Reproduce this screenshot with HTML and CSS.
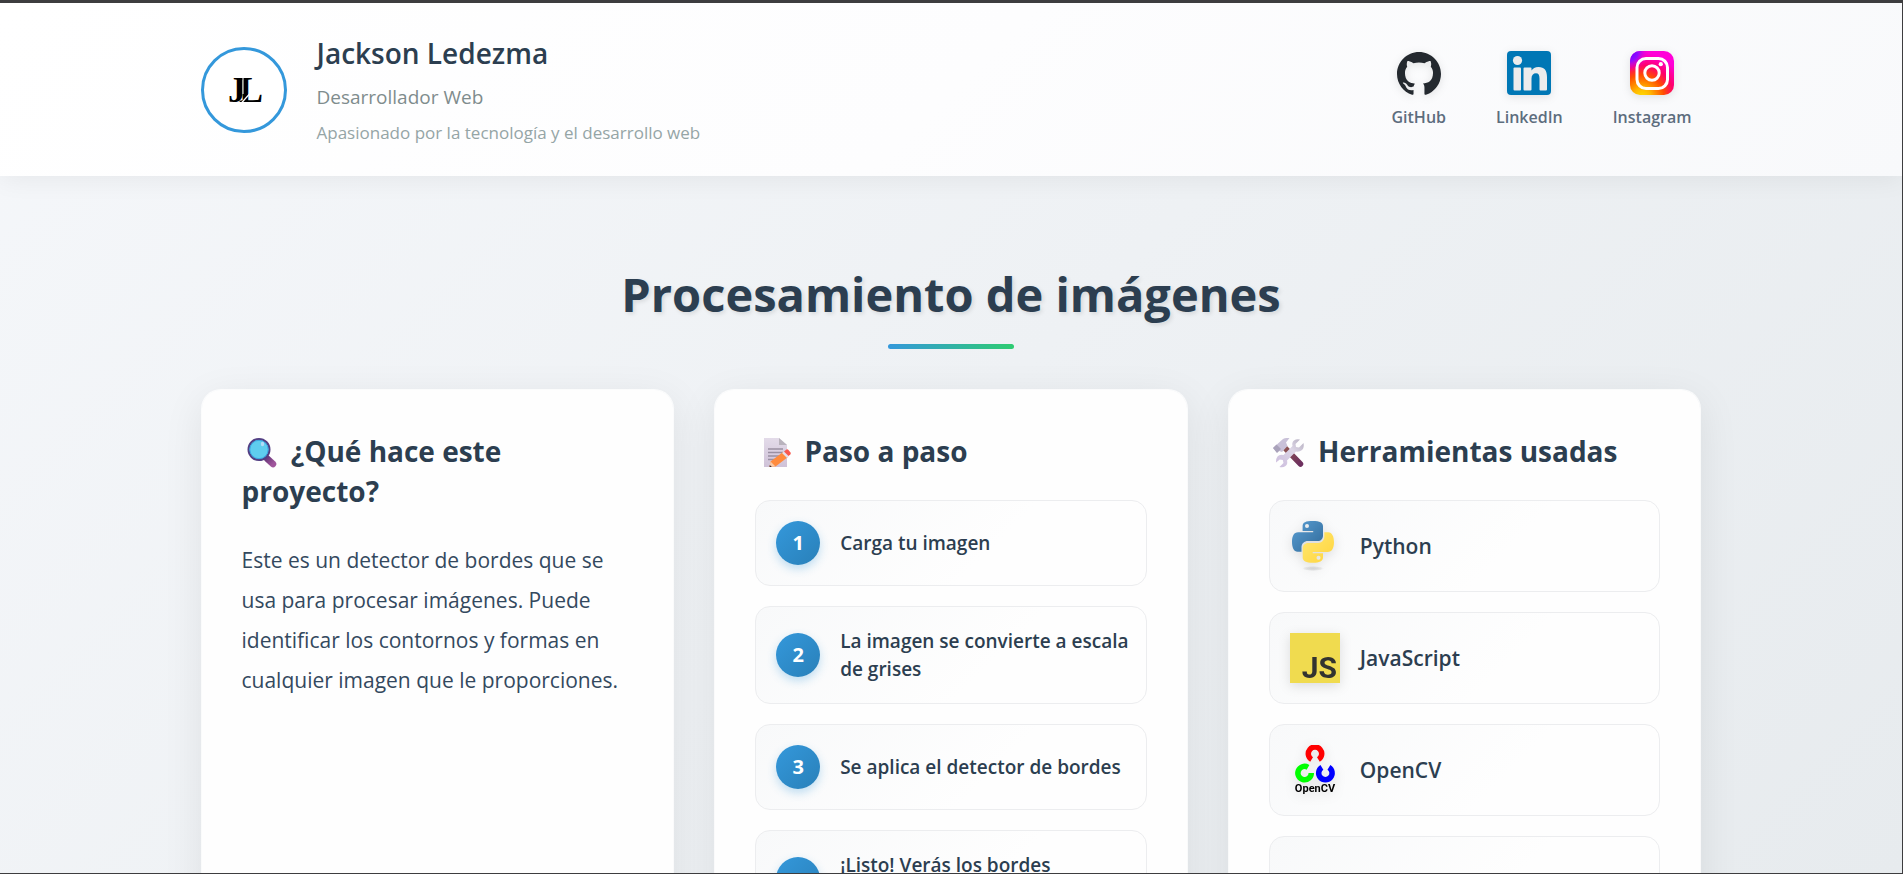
FILE: index.html
```html
<!DOCTYPE html>
<html lang="es">
<head>
<meta charset="utf-8">
<title>Procesamiento de imágenes</title>
<link rel="stylesheet" href="styles.css">
</head>
<body>
<div class="page">
  <header class="site-header">
    <div class="container header-inner">
      <div class="profile">
        <div class="avatar">
          <svg class="logo" width="30" height="28" viewBox="0 0 30 28" role="img" aria-label="Logo JL">
            <text class="logo-letter" x="-1" y="26">J</text>
            <text class="logo-letter" x="10" y="26">L</text>
            <path d="M14 0V18" stroke="#fff" stroke-width="1"/>
            <path d="M12 27.500L24 14" stroke="#fff" stroke-width="1.200"/>
          </svg>
        </div>
        <div class="profile-text">
          <p class="name">Jackson Ledezma</p>
          <p class="role">Desarrollador Web</p>
          <p class="tagline">Apasionado por la tecnología y el desarrollo web</p>
        </div>
      </div>
      <nav class="social">
        <a class="social-link" href="#github">
          <svg class="social-icon" viewBox="0 0 24 24"><path fill="#24292f" d="M12 .5C5.370.5 0 5.870 0 12.500c0 5.300 3.440 9.800 8.200 11.390.6.110.820-.260.820-.580l-.010-2.040c-3.340.730-4.040-1.610-4.040-1.610-.550-1.390-1.330-1.760-1.330-1.760-1.090-.740.080-.730.080-.730 1.200.090 1.840 1.240 1.840 1.240 1.070 1.830 2.810 1.300 3.490 1 .110-.780.420-1.310.760-1.610-2.660-.3-5.470-1.330-5.470-5.930 0-1.310.470-2.380 1.240-3.220-.130-.300-.540-1.520.110-3.180 0 0 1.010-.320 3.300 1.230a11.500 11.500 0 0 1 6.010 0c2.290-1.550 3.300-1.230 3.300-1.230.650 1.660.240 2.880.120 3.180.770.840 1.230 1.910 1.230 3.220 0 4.610-2.810 5.620-5.480 5.920.430.370.810 1.100.810 2.220l-.010 3.290c0 .320.220.700.830.580A12.010 12.010 0 0 0 24 12.500C24 5.870 18.630.5 12 .5z"/></svg>
          <span>GitHub</span>
        </a>
        <a class="social-link" href="#linkedin">
          <svg class="social-icon" viewBox="0 0 44 44"><rect width="44" height="44" rx="4" fill="#0077b5"/><g fill="#ececec"><circle cx="10.500" cy="9.500" r="4.600"/><rect x="6.500" y="16.500" width="7.500" height="23" rx="1"/><path d="M17.500 16.500h6a1 1 0 0 1 1 1v2c1.200-2 3.600-3.600 7-3.600 6 0 8.500 3.600 8.500 10v12.600a1 1 0 0 1-1 1h-5.500a1 1 0 0 1-1-1V27.500c0-3.300-1-5.200-3.500-5.200-2.800 0-4.500 2-4.500 5.200v11a1 1 0 0 1-1 1h-6a1 1 0 0 1-1-1v-21a1 1 0 0 1 1-1z"/></g></svg>
          <span>LinkedIn</span>
        </a>
        <a class="social-link" href="#instagram">
          <svg class="social-icon" viewBox="0 0 44 44">
            <defs>
              <radialGradient id="ig-warm" gradientUnits="userSpaceOnUse" cx="12" cy="46" r="44"><stop offset="0" stop-color="#fd0"/><stop offset=".2" stop-color="#ffb800"/><stop offset=".5" stop-color="#ff4d00"/><stop offset=".72" stop-color="#ff0069"/><stop offset="1" stop-color="#ff00d8"/></radialGradient>
              <radialGradient id="ig-cool" gradientUnits="userSpaceOnUse" cx="-1" cy="1" r="20"><stop offset="0" stop-color="#60f"/><stop offset=".45" stop-color="#8f0cff"/><stop offset="1" stop-color="#ff00c8" stop-opacity="0"/></radialGradient>
            </defs>
            <rect width="44" height="44" rx="10" fill="url(#ig-warm)"/><rect width="44" height="44" rx="10" fill="url(#ig-cool)"/>
            <g fill="none" stroke="#fff" stroke-width="3"><rect x="7" y="7.500" width="30.500" height="30" rx="9"/><circle cx="22" cy="22" r="7.200"/></g><circle cx="30.800" cy="13.200" r="2.100" fill="#fff"/>
          </svg>
          <span>Instagram</span>
        </a>
      </nav>
    </div>
  </header>

  <main class="container main">
    <h1 class="title">Procesamiento de imágenes</h1>
    <div class="cards">
      <section class="card">
        <h2 class="card-title"><svg class="emoji" viewBox="0 0 40 32" aria-hidden="true">
          <defs><linearGradient id="mg-handle" x1="0" y1="0" x2="1" y2="1"><stop offset="0" stop-color="#6d3a7c"/><stop offset="1" stop-color="#a0559c"/></linearGradient></defs>
          <path d="M25 22.500L31 28" stroke="url(#mg-handle)" stroke-width="6.500" stroke-linecap="round"/>
          <circle cx="17" cy="13.500" r="10.500" fill="#5fcdee" stroke="#533f83" stroke-width="2"/><circle cx="17" cy="13.500" r="9.200" fill="none" stroke="#3ba4e0" stroke-width="1"/>
          <ellipse cx="20.500" cy="8" rx="1.700" ry="2.200" fill="#b3dcf7"/>
        </svg> ¿Qué hace este proyecto?</h2>
        <p class="card-text">Este es un detector de bordes que se usa para procesar imágenes. Puede identificar los contornos y formas en cualquier imagen que le proporciones.</p>
      </section>

      <section class="card">
        <h2 class="card-title"><svg class="emoji" viewBox="0 0 40 32" aria-hidden="true">
          <defs><linearGradient id="memo-paper" x1="0" y1="0" x2="0" y2="1"><stop offset="0" stop-color="#e3dbe9"/><stop offset="1" stop-color="#cfc2d8"/></linearGradient></defs>
          <path d="M9 2h15l8 7v22H9z" fill="url(#memo-paper)"/><path d="M24 2l8 7h-8z" fill="#b9b3bd"/>
          <path d="M13 13h15M13 16.500h15M13 20h12M13 23.500h8" stroke="#9a90a3" stroke-width="1.300"/>
          <path d="M15.500 25.500L28 16l5 5-12.500 9.500-6 .5z" fill="#ff8b3d"/><path d="M15.500 25.500l5 5-6 .5z" fill="#f8c9a8"/><path d="M14.800 29l2 2h-2.300z" fill="#3c2b35"/>
          <path d="M27 17l2-1.500 5 4.500-2 2z" fill="#e6e0ea"/><path d="M29 15.500l2.500-2q1-.5 2 .5l2 2.500q.7 1-.2 2l-1.800 1.500z" fill="#f9594f"/>
        </svg> Paso a paso</h2>
        <ol class="list">
          <li class="item"><span class="badge">1</span><span class="step-text">Carga tu imagen</span></li>
          <li class="item"><span class="badge">2</span><span class="step-text">La imagen se convierte a escala de grises</span></li>
          <li class="item"><span class="badge">3</span><span class="step-text">Se aplica el detector de bordes</span></li>
          <li class="item"><span class="badge"></span><span class="step-text">¡Listo! Verás los bordes<br>&nbsp;</span></li>
        </ol>
      </section>

      <section class="card">
        <h2 class="card-title"><svg class="emoji" viewBox="0 0 40 32" aria-hidden="true">
          <defs>
            <linearGradient id="tool-handle" x1="0" y1="0" x2="1" y2="1"><stop offset="0" stop-color="#8d5350"/><stop offset="1" stop-color="#6d2f5f"/></linearGradient>
            <linearGradient id="tool-metal" x1="1" y1="0" x2="0" y2="1"><stop offset="0" stop-color="#b5afc0"/><stop offset=".4" stop-color="#ddd6e6"/><stop offset="1" stop-color="#cbbbdd"/></linearGradient>
          </defs>
          <path d="M16 12L31.500 28" stroke="url(#tool-handle)" stroke-width="5.500" stroke-linecap="round"/>
          <path d="M4 12L14 3q2-1.500 5-1h1.500L17 6.500l1.500 3.500-5.500 6-3-1-2 1.500z" fill="#c9c1d8"/><path d="M4 12l3.500-3.500L12 13l-4 4z" fill="#a9a2ba"/>
          <path d="M31 3.500l-4.500 4.500.5 3 3 .5 4.500-4.500q1 4.500-1.500 7-2.800 2.300-6 1.500l-9 9q1 3.500-1.500 5.500t-6 1l4-4-.7-3-3-.5-3.800 3q-.5-3.500 1.500-6t6-1.500l9-9q-1-3.500 1.500-5.500t6-1z" fill="url(#tool-metal)"/>
        </svg> Herramientas usadas</h2>
        <ul class="list">
          <li class="item">
            <svg class="tool-icon" viewBox="0 0 50 50" aria-hidden="true">
              <defs>
                <linearGradient id="py-blue" x1="0" y1="0" x2="1" y2="1"><stop offset="0" stop-color="#5a9fd4"/><stop offset="1" stop-color="#306998"/></linearGradient>
                <linearGradient id="py-yellow" x1="0" y1="0" x2="1" y2="1"><stop offset="0" stop-color="#ffe873"/><stop offset="1" stop-color="#ffd43b"/></linearGradient>
                <radialGradient id="py-shadow"><stop offset="0" stop-color="#b8b8b8" stop-opacity=".5"/><stop offset="1" stop-color="#7f7f7f" stop-opacity="0"/></radialGradient>
              </defs>
              <ellipse cx="23" cy="47.500" rx="11" ry="2.500" fill="url(#py-shadow)"/>
              <path fill="url(#py-blue)" d="M22.600 0c-6.800 0-10 1.300-10 5.300v4.700h10.600v1.300H8.200C3.700 11.300 2 15.500 2 21s2 9.800 5.500 9.800h4v-4.500c0-4 3-6.300 6.300-6.300h10c3 0 5.200-2.300 5.200-5.300V5.300C33 1.800 30 0 22.600 0zM17 3a2 2 0 1 1 0 4 2 2 0 0 1 0-4z"/>
              <path fill="url(#py-yellow)" d="M34.300 11.300v4.500c0 3.600-3 6.200-6.300 6.200H18c-3 0-5.300 2.300-5.300 5.300v9.500c0 3 3.300 5 10.300 5 6.500 0 10-2 10-5v-4.500H22.700V31h15c4.300 0 6.300-4.300 6.300-9.800s-2-9.900-5.600-9.900zM28.500 34.800a2 2 0 1 1 0 4 2 2 0 0 1 0-4z"/>
            </svg>
            <span class="tool-name">Python</span>
          </li>
          <li class="item">
            <svg class="tool-icon" viewBox="0 0 50 50" aria-hidden="true"><rect width="50" height="50" fill="#f0db4f"/><text class="js-mark" x="47" y="45" text-anchor="end">JS</text></svg>
            <span class="tool-name">JavaScript</span>
          </li>
          <li class="item">
            <svg class="tool-icon" viewBox="0 0 50 50" aria-hidden="true">
              <g fill="none" stroke-width="5.500">
                <path stroke="#f00" d="M21.600 14.500A6.700 6.700 0 1 1 28.400 14.500"/>
                <path stroke="#0f0" d="M18 22.300A6.700 6.700 0 1 0 21.300 28"/>
                <path stroke="#00f" d="M31.900 22.300A6.700 6.700 0 1 0 38.900 22.300"/>
              </g>
              <text class="cv-mark" x="25" y="47" text-anchor="middle">OpenCV</text>
            </svg>
            <span class="tool-name">OpenCV</span>
          </li>
          <li class="item"><span class="tool-icon"></span></li>
        </ul>
      </section>
    </div>
  </main>
</div>
</body>
</html>
```
FILE: styles.css
```css
* { box-sizing: border-box; }

body, h1, h2, p, ol, ul { margin: 0; padding: 0; }

body {
  font-family: "Open Sans", "Noto Sans", sans-serif;
  color: #2c3e50;
}

.page {
  height: 100vh;
  overflow: hidden;
  border: solid #3d3d3f;
  border-width: 3px 1px 1px 0;
  background: linear-gradient(135deg, #f5f7fa 0%, #e7ebee 100%);
}

.container {
  width: 100%;
  max-width: 1501px;
  margin: 0 auto;
}

.site-header {
  padding: 29px 0;
  background: linear-gradient(135deg, #ffffff 0%, #fdfdfe 50%, #f8f9fb 100%);
  box-shadow: 0 4px 24px rgba(0, 0, 0, 0.06);
}

.header-inner {
  display: flex;
  align-items: center;
  justify-content: space-between;
}

.profile {
  display: flex;
  align-items: center;
  gap: 30px;
}

.avatar {
  display: flex;
  align-items: center;
  justify-content: center;
  width: 86px;
  height: 86px;
  border: 3px solid #3498db;
  border-radius: 50%;
  background: #fff;
}

.logo { overflow: visible; }
.logo-letter { font: bold 36px "Liberation Serif", serif; }

.profile-text {
  display: flex;
  flex-direction: column;
  gap: 8px;
}

.name { font-size: 28px; font-weight: 600; line-height: 43px; }
.role { font-size: 19px; line-height: 28px; color: #7f8c8d; }
.tagline { font-size: 17px; line-height: 28px; color: #95a5a6; }

.social { display: flex; gap: 30px; }

.social-link {
  display: flex;
  flex-direction: column;
  align-items: center;
  gap: 10px;
  padding: 10px;
  font-size: 16px;
  font-weight: 600;
  line-height: 24px;
  color: #5d6d7e;
  text-decoration: none;
}

.social-icon {
  width: 44px;
  height: 44px;
  filter: drop-shadow(0 2px 4px rgba(0, 0, 0, 0.1));
}

.main { padding-top: 84px; }

.title {
  margin-bottom: 40px;
  font-size: 47px;
  font-weight: 700;
  line-height: 68px;
  text-align: center;
  text-shadow: 2px 2px 4px rgba(0, 0, 0, 0.1);
}

.title::after {
  content: "";
  display: block;
  width: 126px;
  height: 5px;
  margin: 16px auto 0;
  border-radius: 3px;
  background: linear-gradient(90deg, #3498db, #2ecc71);
}

.cards {
  display: grid;
  grid-template-columns: repeat(3, 1fr);
  gap: 40px;
}

.card {
  padding: 41px 40px 40px;
  border: 1px solid rgba(255, 255, 255, 0.8);
  border-radius: 20px;
  background: #fefefe;
  background-clip: padding-box;
  box-shadow: 0 10px 40px rgba(0, 0, 0, 0.08);
}

.card-title {
  margin-bottom: 29px;
  font-size: 28px;
  font-weight: 700;
  line-height: 40px;
}

.emoji {
  width: 40px;
  height: 32px;
  margin-right: 2px;
  vertical-align: -6px;
}

.card-text {
  font-size: 21px;
  line-height: 40px;
  color: #34495e;
}

.list {
  display: flex;
  flex-direction: column;
  gap: 20px;
  list-style: none;
}

.item {
  display: flex;
  align-items: center;
  gap: 20px;
  padding: 20px 14px 20px 20px;
  border: 1px solid #ecedef;
  border-radius: 15px;
  background: linear-gradient(135deg, #f8f9fa 0%, #fefefe 60%);
}

.badge {
  flex: none;
  width: 44px;
  height: 44px;
  border-radius: 50%;
  background: linear-gradient(135deg, #3498db, #2980b9);
  box-shadow: 0 4px 10px rgba(52, 152, 219, 0.3);
  color: #fff;
  font-size: 20px;
  font-weight: 700;
  line-height: 44px;
  text-align: center;
}

.step-text {
  font-size: 19px;
  font-weight: 600;
  line-height: 28px;
}

.tool-icon {
  flex: none;
  width: 50px;
  height: 50px;
  filter: drop-shadow(0 3px 6px rgba(0, 0, 0, 0.12));
}

.tool-name {
  font-size: 21px;
  font-weight: 600;
  line-height: 28px;
}

.js-mark { font: bold 30px Roboto, sans-serif; fill: #323330; }
.cv-mark { font: bold 11px Roboto, sans-serif; fill: #000; }
```
